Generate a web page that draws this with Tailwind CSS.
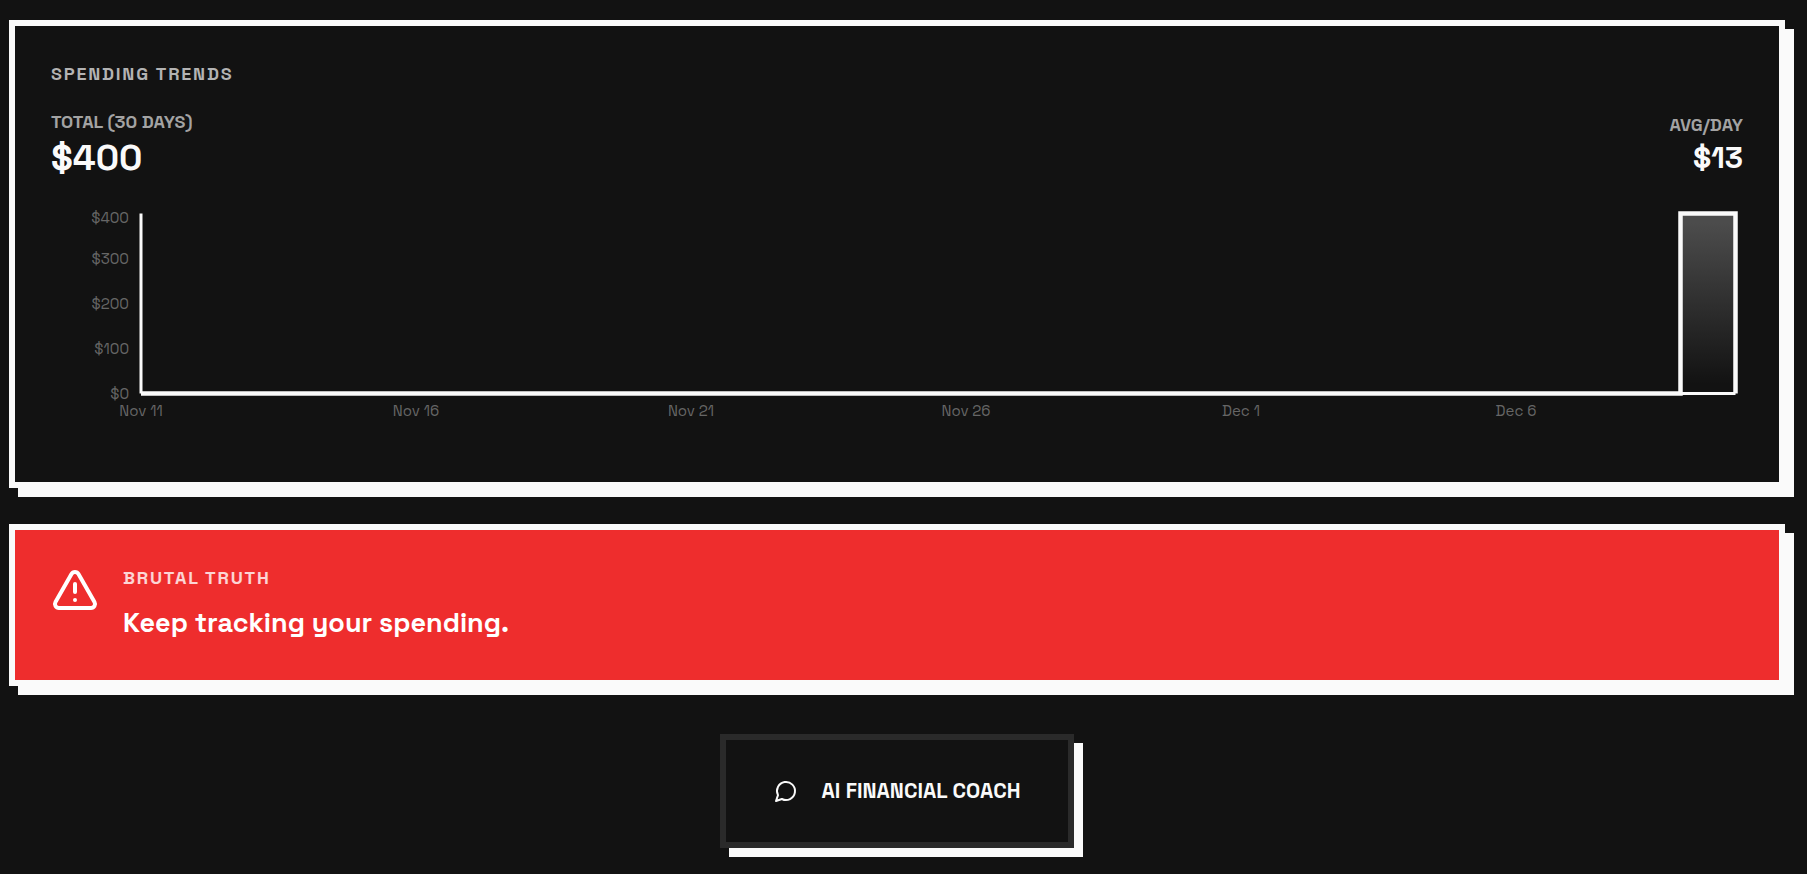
<!DOCTYPE html>
<html lang="en">
<head>
    <meta charset="UTF-8">
    <meta name="viewport" content="width=device-width, initial-scale=1.0">
    <script src="https://cdn.jsdelivr.net/npm/@tailwindcss/browser@4"></script>
    <title>Spending Trends</title>
</head>
<body class="min-h-screen bg-[#121212] text-[#fafafa] font-['Space_Grotesk','Inter',sans-serif]">
    <main class="flex flex-col gap-9 pt-5 pb-6 pl-[9px] pr-[22px]">

        <!--Spending Trends-->
        <section class="border-6 border-[#fafafa] bg-[#121212] p-9 shadow-[9px_9px_0_#fafafa]">
            <h2 class="mb-6 text-[18px] leading-6 font-bold tracking-widest uppercase text-[#b3b3b3]">Spending Trends</h2>

            <div class="mb-6 flex items-center justify-between">
                <div>
                    <p class="text-[18px] leading-6 font-semibold uppercase text-[#a3a3a3]">Total (30 days)</p>
                    <p class="text-4xl leading-12 font-bold">$400</p>
                </div>
                <div class="text-right">
                    <p class="text-[18px] leading-6 font-semibold uppercase text-[#a3a3a3]">Avg/day</p>
                    <p class="text-3xl leading-[42px] font-bold">$13</p>
                </div>
            </div>

            <!--Chart-->
            <div class="flex h-60 gap-3 pr-[7px] text-[15px] leading-[18px] text-[#666666]">
                <div class="grid w-[78px] shrink-0 content-start grid-rows-[41px_45px_45px_45px_18px] pt-[3px] text-right">
                    <span>$400</span>
                    <span>$300</span>
                    <span>$200</span>
                    <span>$100</span>
                    <span>$0</span>
                </div>
                <div class="flex-1 pt-[7px]">
                    <svg class="block h-[181px] w-full overflow-visible" viewBox="0 0 1595 181" preserveAspectRatio="none" fill="none">
                        <defs>
                            <linearGradient id="spendFill" x1="0" y1="0" x2="0" y2="1">
                                <stop offset="5%" stop-color="#fafafa" stop-opacity="0.25"/>
                                <stop offset="95%" stop-color="#fafafa" stop-opacity="0"/>
                            </linearGradient>
                        </defs>
                        <path d="M0 180.5H1594.5" stroke="#fafafa" stroke-width="3" vector-effect="non-scaling-stroke"/>
                        <path d="M0 .5V180.5" stroke="#fafafa" stroke-width="3" vector-effect="non-scaling-stroke"/>
                        <path d="M1539.5 180.5V.5H1594.5V180.5Z" fill="url(#spendFill)"/>
                        <path d="M0 180.5H1539.5V.5H1594.5V180.5" stroke="#fafafa" stroke-width="4.5" vector-effect="non-scaling-stroke"/>
                    </svg>
                    <div class="grid grid-cols-[5fr_5fr_5fr_5fr_5fr_4fr] pt-2 whitespace-nowrap">
                        <span class="flex w-0 justify-center">Nov 11</span>
                        <span class="flex w-0 justify-center">Nov 16</span>
                        <span class="flex w-0 justify-center">Nov 21</span>
                        <span class="flex w-0 justify-center">Nov 26</span>
                        <span class="flex w-0 justify-center">Dec 1</span>
                        <span class="flex w-0 justify-center">Dec 6</span>
                    </div>
                </div>
            </div>
        </section>

        <!--Brutal Truth-->
        <section class="flex items-start gap-6 border-6 border-[#fafafa] bg-[#ee2d2d] p-9 text-white shadow-[9px_9px_0_#fafafa]">
            <svg class="size-12 shrink-0" viewBox="0 0 24 24" fill="none" stroke="currentColor" stroke-width="2" stroke-linecap="round" stroke-linejoin="round">
                <path d="m21.73 18-8-14a2 2 0 0 0-3.48 0l-8 14A2 2 0 0 0 4 21h16a2 2 0 0 0 1.73-3"/>
                <path d="M12 9v4"/>
                <path d="M12 17h.01"/>
            </svg>
            <div>
                <h2 class="mb-3 text-[18px] leading-6 font-bold tracking-widest uppercase text-white/80">Brutal Truth</h2>
                <p class="text-[27px] leading-[42px] font-bold">Keep tracking your spending.</p>
            </div>
        </section>

        <!--AI Coach-->
        <div class="flex justify-center pt-3">
            <button type="button" class="flex items-center gap-6 border-6 border-[#2a2a2a] bg-[#121212] px-12 py-9 text-[21px] leading-[30px] font-bold uppercase shadow-[9px_9px_0_#fafafa]">
                <svg class="size-6 shrink-0" viewBox="0 0 24 24" fill="none" stroke="currentColor" stroke-width="2" stroke-linecap="round" stroke-linejoin="round">
                    <path d="M7.9 20A9 9 0 1 0 4 16.1L2 22Z"/>
                </svg>
                AI Financial Coach
            </button>
        </div>
    </main>
</body>
</html>
